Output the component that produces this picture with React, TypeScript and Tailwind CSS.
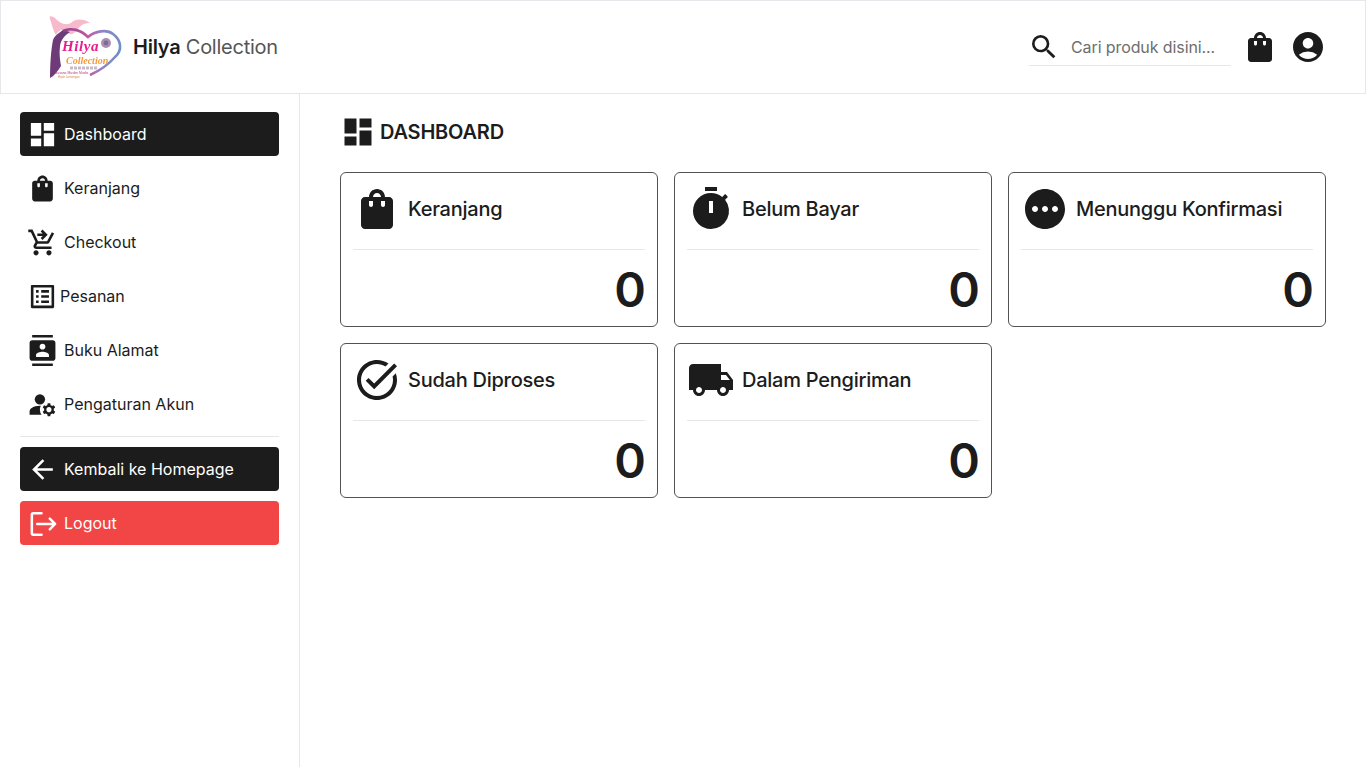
import React from "react";
import {
  MdDashboard,
  MdShoppingBag,
  MdOutlineShoppingCartCheckout,
  MdOutlineListAlt,
  MdContacts,
  MdManageAccounts,
  MdArrowBack,
  MdSearch,
  MdAccountCircle,
  MdTimer,
  MdPending,
  MdTaskAlt,
  MdLocalShipping,
} from "react-icons/md";

function Logo() {
  return (
    <svg width="80" height="66" viewBox="0 0 80 66" className="shrink-0">
      <defs>
        <filter id="soft" x="-5%" y="-5%" width="110%" height="110%">
          <feGaussianBlur stdDeviation="0.35" />
        </filter>
        <linearGradient id="heart" x1="0" y1="0" x2="1" y2="0">
          <stop offset="0" stopColor="#8a3f86" />
          <stop offset="0.45" stopColor="#c45aa6" />
          <stop offset="0.7" stopColor="#8e86c4" />
          <stop offset="1" stopColor="#6f8fc4" />
        </linearGradient>
      </defs>
      <g filter="url(#soft)">
        <path d="M5 5 C3 1 8 2 11 5 C15 9 20 12 26 9 C30 5 37 4 45 9 C39 9 36 11 33 15 C29 20 26 22 22 18 C18 14 14 16 11 21 C8 17 7 10 5 5 Z" fill="#f7b9cb" />
        <path d="M5 64 C5 50 6 36 8 26 C10 21 14 19 18 16 L25 18 C19 22 16 26 15 32 C14 40 15 46 16 52 C12 58 9 62 5 64 Z" fill="#6e3b78" />
        <path d="M18 17 C26 13 36 16 43 23 C50 17 62 15 68 20 C76 26 78 36 70 43 C64 50 56 56 45 61" fill="none" stroke="url(#heart)" strokeWidth="2.6" />
        <circle cx="61" cy="29" r="5" fill="#a98fb3" />
        <circle cx="61" cy="29" r="2.4" fill="#7f6a90" />
        <text x="17" y="37" letterSpacing="0.6" fontFamily="'Liberation Serif', serif" fontStyle="italic" fontWeight="700" fontSize="15" fill="#ec1a8e">Hilya</text>
        <text x="21" y="50" fontFamily="'Liberation Serif', serif" fontStyle="italic" fontWeight="700" fontSize="10" fill="#f59a3b">Collection</text>
        <path d="M25 54 h27" stroke="#c9b9c9" strokeWidth="3" strokeDasharray="3 1" />
        <text x="10" y="60" fontFamily="'Liberation Sans', sans-serif" fontSize="3.4" fill="#c0397f">Busana Muslim Modis</text>
        <text x="13" y="64" fontFamily="'Liberation Sans', sans-serif" fontSize="3" fill="#d98a4a">Hijab Lamongan</text>
      </g>
    </svg>
  );
}

function LogoutIcon() {
  return (
    <svg width="31" height="31" viewBox="0 0 32 32" fill="none" stroke="currentColor" strokeWidth="2.6" strokeLinecap="round" strokeLinejoin="round">
      <path d="M15 5.5 H6.5 a1.5 1.5 0 0 0 -1.5 1.5 V26 a1.5 1.5 0 0 0 1.5 1.5 H15" />
      <path d="M10.5 16.5 H29 M23.5 11 l5.5 5.5 l-5.5 5.5" />
    </svg>
  );
}

const navItems = [
  { label: "Keranjang", icon: <MdShoppingBag size={31} />, gap: "gap-1.5" },
  { label: "Checkout", icon: <MdOutlineShoppingCartCheckout size={31} />, gap: "gap-1.5" },
  { label: "Pesanan", icon: <MdOutlineListAlt size={31} />, gap: "gap-0.5" },
  { label: "Buku Alamat", icon: <MdContacts size={31} />, gap: "gap-1.5" },
  { label: "Pengaturan Akun", icon: <MdManageAccounts size={31} />, gap: "gap-1.5" },
];

const cards = [
  { label: "Keranjang", icon: <MdShoppingBag size={48} /> },
  { label: "Belum Bayar", icon: <MdTimer size={48} /> },
  { label: "Menunggu Konfirmasi", icon: <MdPending size={48} /> },
  { label: "Sudah Diproses", icon: <MdTaskAlt size={48} /> },
  { label: "Dalam Pengiriman", icon: <MdLocalShipping size={48} /> },
];

export default function App() {
  return (
    <div className="h-[767px] overflow-hidden bg-white text-[#1c1c1c] font-['Inter',sans-serif]">
      <header className="h-[94px] border border-[#e5e7eb] flex items-center justify-between pl-[44px] pr-[39px]">
        <div className="flex items-center gap-2">
          <Logo />
          <div className="text-[20px] leading-7 tracking-[-0.25px] text-[#555555]">
            <span className="font-semibold text-[#1c1c1c]">Hilya</span> Collection
          </div>
        </div>
        <div className="flex items-center">
          <div className="w-[202px] h-[38px] border-b border-[#e5e7eb] flex items-center gap-2.5 mr-[11px]">
            <MdSearch size={32} className="shrink-0 -ml-px" />
            <span className="ml-px text-base tracking-[-0.1px] text-[#6e6e6e] whitespace-nowrap">Cari produk disini...</span>
          </div>
          <MdShoppingBag size={36} className="mr-3" />
          <MdAccountCircle size={36} />
        </div>
      </header>
      <div className="flex h-[673px]">
        <aside className="w-[300px] shrink-0 border-r border-[#e5e7eb] pl-5 pr-5 pt-[18px]">
          <div className="flex flex-col gap-2.5">
            <div className="h-11 rounded bg-[#1c1c1c] text-white flex items-center gap-1.5 pl-[7px]">
              <MdDashboard size={31} />
              <span className="text-base">Dashboard</span>
            </div>
            {navItems.map((item) => (
              <div key={item.label} className={`h-11 rounded flex items-center pl-[7px] ${item.gap}`}>
                {item.icon}
                <span className="text-base">{item.label}</span>
              </div>
            ))}
          </div>
          <div className="border-t border-[#e5e7eb] mt-2.5 mb-2.5" />
          <div className="flex flex-col gap-2.5">
            <div className="h-11 rounded bg-[#1c1c1c] text-white flex items-center gap-1.5 pl-[7px]">
              <MdArrowBack size={31} />
              <span className="text-base">Kembali ke Homepage</span>
            </div>
            <div className="h-11 rounded bg-[#f24545] text-white flex items-center gap-1.5 pl-[7px]">
              <LogoutIcon />
              <span className="text-base">Logout</span>
            </div>
          </div>
        </aside>
        <main className="flex-1 pl-10 pr-10 pt-5">
          <div className="h-9 flex items-center gap-[3px]">
            <MdDashboard size={36} className="shrink-0" />
            <h1 className="text-[20px] font-semibold leading-7 tracking-[-0.2px] ml-px">DASHBOARD</h1>
          </div>
          <div className="grid grid-cols-3 gap-4 mt-[22px]">
            {cards.map((c) => (
              <div key={c.label} className="h-[155px] rounded-md border border-[#525252] px-3 pt-3">
                <div className="flex items-center gap-[7px] h-[48px]">
                  <span className="shrink-0">{c.icon}</span>
                  <span className="text-[20px] font-medium leading-7 tracking-[-0.25px]">{c.label}</span>
                </div>
                <div className="border-t border-[#e5e7eb] mt-4" />
                <div className="text-right text-[48px] font-semibold leading-[48px] mt-4 -mr-px">0</div>
              </div>
            ))}
          </div>
        </main>
      </div>
    </div>
  );
}
